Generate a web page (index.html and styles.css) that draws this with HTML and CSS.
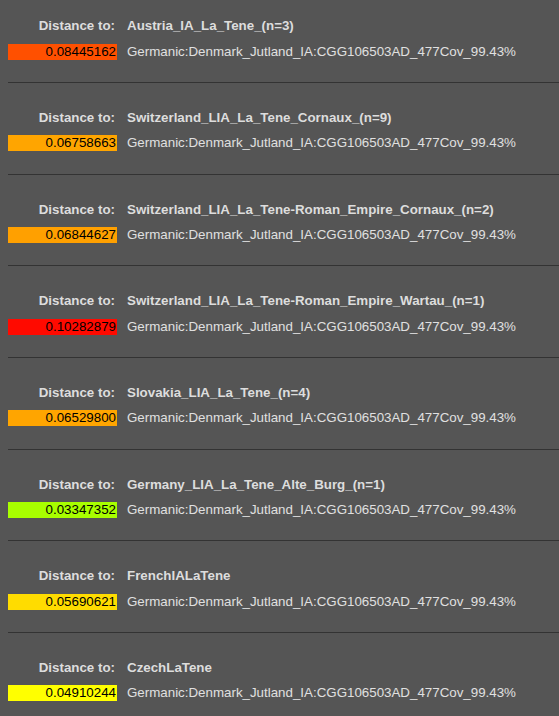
FILE: index.html
```html
<!DOCTYPE html>
<html>
<head>
<meta charset="utf-8">
<link rel="stylesheet" href="styles.css">
</head>
<body>
<div class="list">
  <div class="entry">
    <div class="row"><div class="label">Distance to:</div><div class="title">Austria_IA_La_Tene_(n=3)</div></div>
    <div class="row data"><div class="bar c1">0.08445162</div><div class="sample">Germanic:Denmark_Jutland_IA:CGG106503AD_477Cov_99.43%</div></div>
  </div>
  <div class="entry">
    <div class="row"><div class="label">Distance to:</div><div class="title">Switzerland_LIA_La_Tene_Cornaux_(n=9)</div></div>
    <div class="row data"><div class="bar c2">0.06758663</div><div class="sample">Germanic:Denmark_Jutland_IA:CGG106503AD_477Cov_99.43%</div></div>
  </div>
  <div class="entry">
    <div class="row"><div class="label">Distance to:</div><div class="title">Switzerland_LIA_La_Tene-Roman_Empire_Cornaux_(n=2)</div></div>
    <div class="row data"><div class="bar c3">0.06844627</div><div class="sample">Germanic:Denmark_Jutland_IA:CGG106503AD_477Cov_99.43%</div></div>
  </div>
  <div class="entry">
    <div class="row"><div class="label">Distance to:</div><div class="title">Switzerland_LIA_La_Tene-Roman_Empire_Wartau_(n=1)</div></div>
    <div class="row data"><div class="bar c4">0.10282879</div><div class="sample">Germanic:Denmark_Jutland_IA:CGG106503AD_477Cov_99.43%</div></div>
  </div>
  <div class="entry">
    <div class="row"><div class="label">Distance to:</div><div class="title">Slovakia_LIA_La_Tene_(n=4)</div></div>
    <div class="row data"><div class="bar c5">0.06529800</div><div class="sample">Germanic:Denmark_Jutland_IA:CGG106503AD_477Cov_99.43%</div></div>
  </div>
  <div class="entry">
    <div class="row"><div class="label">Distance to:</div><div class="title">Germany_LIA_La_Tene_Alte_Burg_(n=1)</div></div>
    <div class="row data"><div class="bar c6">0.03347352</div><div class="sample">Germanic:Denmark_Jutland_IA:CGG106503AD_477Cov_99.43%</div></div>
  </div>
  <div class="entry">
    <div class="row"><div class="label">Distance to:</div><div class="title">FrenchIALaTene</div></div>
    <div class="row data"><div class="bar c7">0.05690621</div><div class="sample">Germanic:Denmark_Jutland_IA:CGG106503AD_477Cov_99.43%</div></div>
  </div>
  <div class="entry">
    <div class="row"><div class="label">Distance to:</div><div class="title">CzechLaTene</div></div>
    <div class="row data"><div class="bar c8">0.04910244</div><div class="sample">Germanic:Denmark_Jutland_IA:CGG106503AD_477Cov_99.43%</div></div>
  </div>
</div>
</body>
</html>
```
FILE: styles.css
```css
html, body {
  margin: 0;
  padding: 0;
  background: #555555;
  overflow: hidden;
}
body {
  font-family: "Liberation Sans", Arial, sans-serif;
  font-size: 13.33px;
  color: #dddddd;
}
.list {
  display: flex;
  flex-direction: column;
  padding-left: 8px;
}
.entry {
  display: flex;
  flex-direction: column;
  padding-top: 27px;
  padding-bottom: 22.17px;
  border-bottom: 1px solid #333333;
}
.entry:first-child {
  padding-top: 18.33px;
}
.row {
  display: flex;
  align-items: center;
  line-height: 16px;
  gap: 10px;
  white-space: nowrap;
}
.row.data {
  margin-top: 9.5px;
}
.label {
  width: 109px;
  box-sizing: border-box;
  padding-right: 2px;
  text-align: right;
  font-weight: bold;
  color: #dddddd;
}
.title {
  font-weight: bold;
  color: #dddddd;
}
.bar {
  width: 109px;
  height: 16px;
  box-sizing: border-box;
  padding-right: 1px;
  text-align: right;
  color: #000000;
}
.sample {
  color: #e0e0e0;
}
.c1 { background: #ff5000; }
.c2 { background: #ffa500; }
.c3 { background: #ffa000; }
.c4 { background: #ff0a00; }
.c5 { background: #ffa500; }
.c6 { background: #a8ff00; }
.c7 { background: #ffdc00; }
.c8 { background: #ffff00; }
```
